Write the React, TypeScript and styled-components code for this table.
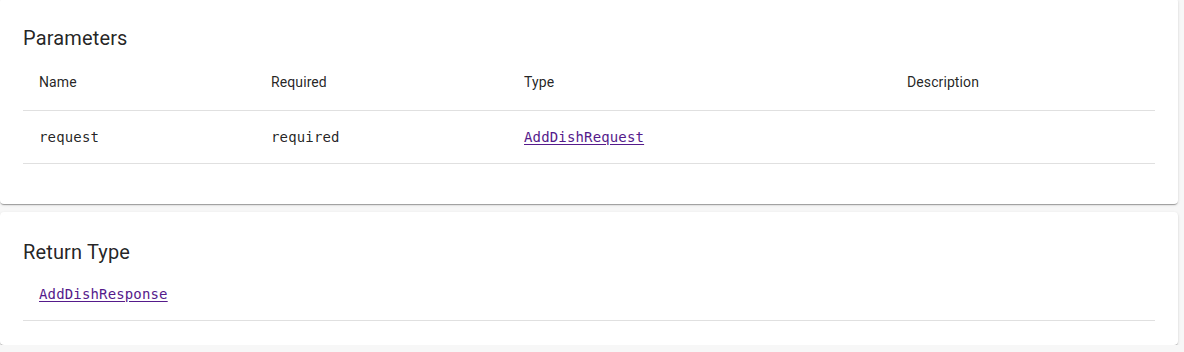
import React from "react";
import styled, { createGlobalStyle } from "styled-components";

const GlobalStyle = createGlobalStyle`
  body {
    margin: 0;
    background: #f7f7f7;
    font-family: Roboto, "Noto Sans", sans-serif;
    color: rgba(0, 0, 0, 0.87);
  }
`;

const Page = styled.div`
  width: 1178px;
  margin-top: -2px;
  display: flex;
  flex-direction: column;
  gap: 8px;
`;

const Card = styled.section`
  background: #fff;
  border-radius: 4px;
  padding: 24px 23px;
  box-shadow: 0 2px 1px -1px rgba(0, 0, 0, 0.2), 0 1px 1px 0 rgba(0, 0, 0, 0.14),
    0 1px 3px 0 rgba(0, 0, 0, 0.12);
`;

const Title = styled.h6`
  margin: 0;
  font-size: 20px;
  font-weight: 400;
  line-height: 32px;
  letter-spacing: 0.15px;
`;

const Table = styled.div<{ $spaced?: boolean }>`
  display: grid;
  grid-template-columns: 232px 253px 383px 1fr;
  margin-bottom: ${(p) => (p.$spaced ? "16px" : "0")};
`;

const Cell = styled.div<{ $head?: boolean }>`
  display: flex;
  align-items: center;
  height: ${(p) => (p.$head ? "56px" : "52px")};
  padding: 0 16px;
  border-bottom: 1px solid rgb(224, 224, 224);
  font-size: 14px;
  font-family: ${(p) =>
    p.$head ? 'Roboto, "Noto Sans", sans-serif' : '"DejaVu Sans Mono", monospace'};
  letter-spacing: ${(p) => (p.$head ? "0.1px" : "0.15px")};
`;

const Row = styled.div`
  display: flex;
  align-items: center;
  height: 52px;
  padding: 0 16px;
  border-bottom: 1px solid rgb(224, 224, 224);
  font-family: "DejaVu Sans Mono", monospace;
  font-size: 14px;
  letter-spacing: 0.15px;
`;

const TypeLink = styled.a`
  color: #551a8b;
  text-decoration: underline;
  text-underline-offset: 2px;
  cursor: pointer;
`;

export default function App() {
  return (
    <>
      <GlobalStyle />
      <Page>
        <Card>
          <Title>Parameters</Title>
          <Table $spaced>
            <Cell $head>Name</Cell>
            <Cell $head>Required</Cell>
            <Cell $head>Type</Cell>
            <Cell $head>Description</Cell>
            <Cell>request</Cell>
            <Cell>required</Cell>
            <Cell>
              <TypeLink>AddDishRequest</TypeLink>
            </Cell>
            <Cell />
          </Table>
        </Card>
        <Card>
          <Title>Return Type</Title>
          <Row>
            <TypeLink>AddDishResponse</TypeLink>
          </Row>
        </Card>
      </Page>
    </>
  );
}
